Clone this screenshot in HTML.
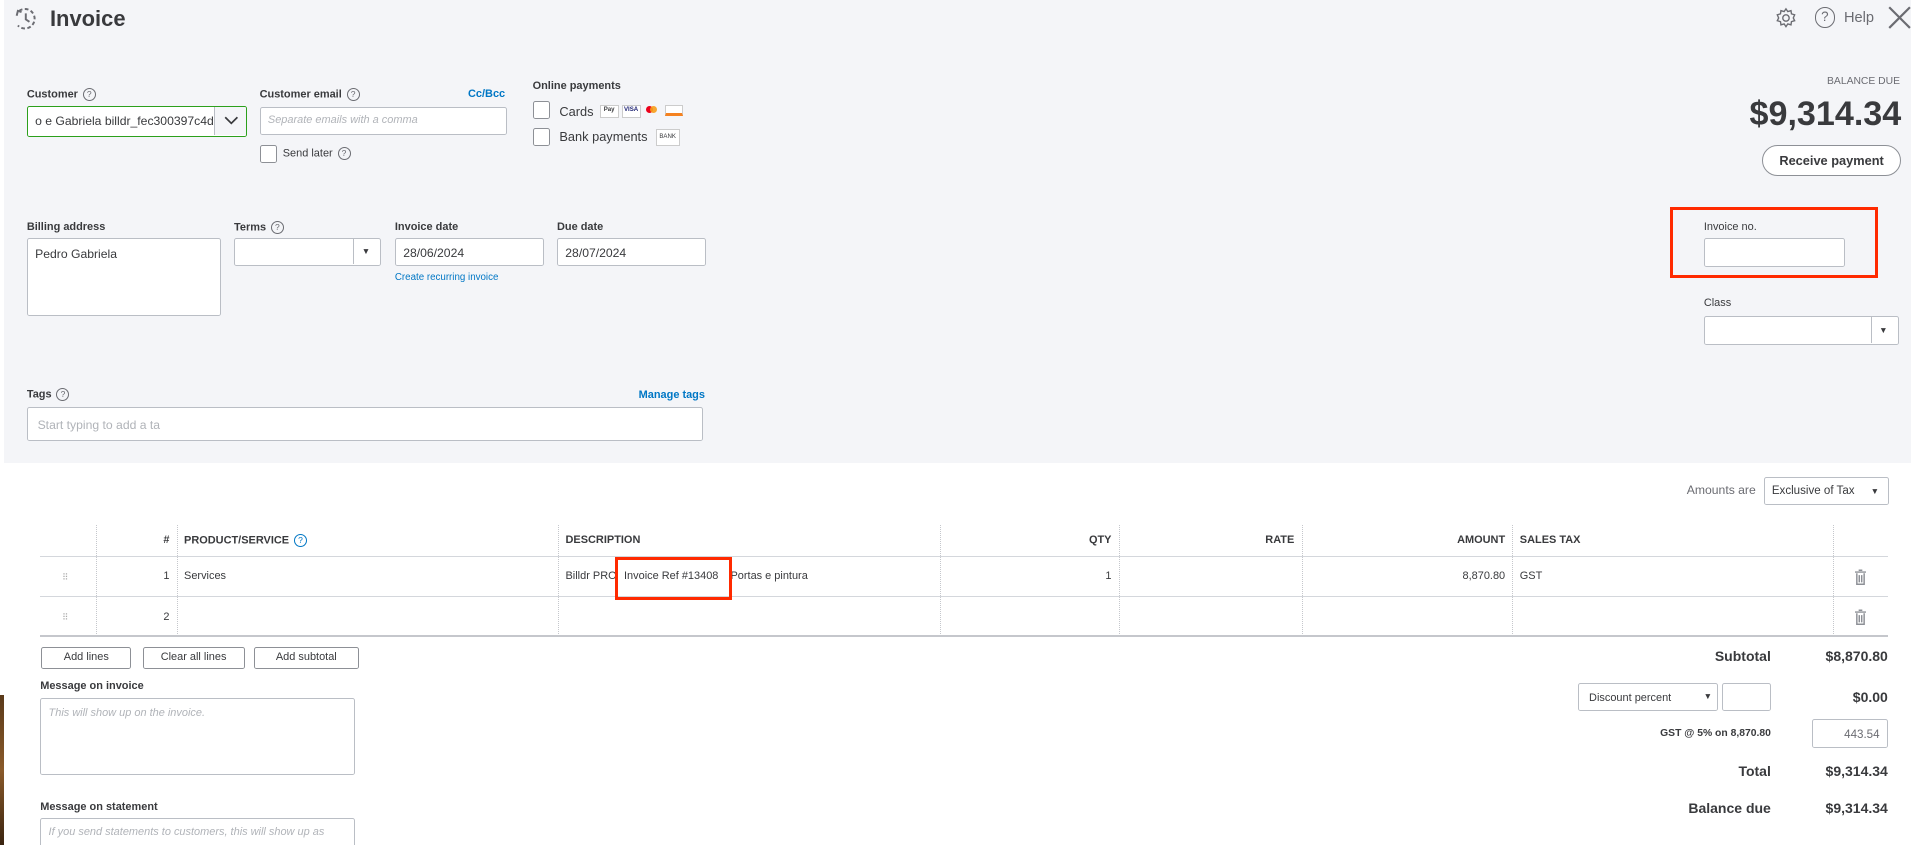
<!DOCTYPE html>
<html><head><meta charset="utf-8"><style>
html,body{margin:0;padding:0;width:1911px;height:845px;overflow:hidden;background:#fff}
#w{zoom:1.21875;position:relative;width:1568px;height:693px;font-family:"Liberation Sans",sans-serif;color:#393a3d;font-size:10px}
.a{position:absolute}
.top{left:3px;top:0;width:1565px;height:380px;background:#f4f5f8}
.lbl{font-size:9px;font-weight:bold;color:#393a3d}
.inp{background:#fff;border:1px solid #babec5;border-radius:2px;box-sizing:border-box}
.q{display:inline-block;width:9px;height:9px;border:1px solid #6b6c72;border-radius:50%;font-size:7px;line-height:9px;text-align:center;color:#6b6c72;font-weight:normal;vertical-align:middle;margin-left:4px}
.lnk{color:#0077c5;font-size:9px}
.cb{width:13px;height:13px;border:1px solid #8d9096;background:#fff;border-radius:2px}
.ph{color:#b0b3b8;font-style:italic;font-size:9px}
.vl{border-left:1px dotted #c5c7cc;top:431px;height:91px;width:0}
.th{font-size:9px;font-weight:bold;top:438px}
.td{font-size:9px;top:468px}
.btn{border:1px solid #8d9096;border-radius:2px;background:#fff;font-size:9px;text-align:center;line-height:16px;top:531px;height:16px}
.red{border:3px solid #ff2a00}
.tot{font-size:11.5px;font-weight:bold;text-align:right}
</style></head><body><div id="w">
<div class="a top"></div>
<svg class="a" style="left:11px;top:5px" width="21" height="21" viewBox="0 0 21 21" fill="none" stroke="#6b6c72" stroke-width="1.6"><path d="M5 4 A8 8 0 1 1 4 16" stroke-dasharray="3 2"/><path d="M10.5 6v5l3 2"/><path d="M3 8l1-4 3 1"/></svg>
<div class="a" style="left:41px;top:5px;font-size:18px;font-weight:bold;color:#393a3d">Invoice</div>
<svg class="a" style="left:1456px;top:6px" width="18" height="18" viewBox="0 0 24 24" fill="none" stroke="#6b6c72" stroke-width="1.5"><circle cx="12" cy="12" r="3.5"/><path d="M12 2l2 3 3.5-1 .5 3.5 3.5 1-1.5 3.5 1.5 3-3.5 1-.5 3.5-3.5-1-2 3-2-3-3.5 1-.5-3.5-3.5-1 1.5-3-1.5-3.5 3.5-1 .5-3.5 3.5 1z"/></svg>
<div class="a" style="left:1489px;top:6px;width:15px;height:15px;border:1.5px solid #6b6c72;border-radius:50%;text-align:center;font-size:11px;line-height:15px;color:#6b6c72">?</div>
<div class="a" style="left:1513px;top:8px;font-size:12px;color:#6b6c72">Help</div>
<svg class="a" style="left:1549px;top:5px" width="19" height="19" viewBox="0 0 19 19" stroke="#6b6c72" stroke-width="1.8"><path d="M1 1l17 17M18 1L1 18"/></svg>
<div class="a lbl" style="left:22px;top:72px">Customer<span class="q">?</span></div>
<div class="a inp" style="left:22px;top:87px;width:181px;height:25px;border:1px solid #2ca01c;overflow:hidden"><div class="a" style="left:6px;top:6px;font-size:10px;white-space:nowrap">o e Gabriela billdr_fec300397c4d</div><div class="a" style="left:153px;top:0;width:27px;height:23px;border-left:1px solid #babec5;background:#f4f5f8"></div><svg class="a" style="left:161px;top:7px" width="12" height="8" viewBox="0 0 12 8" fill="none" stroke="#393a3d" stroke-width="1.4"><path d="M1 1l5 5 5-5"/></svg></div>
<div class="a lbl" style="left:213px;top:72px">Customer email<span class="q">?</span></div>
<div class="a lnk" style="left:384px;top:72px;font-weight:bold">Cc/Bcc</div>
<div class="a inp" style="left:213px;top:88px;width:203px;height:23px"><span class="a ph" style="left:6px;top:5px">Separate emails with a comma</span></div>
<div class="a cb" style="left:213px;top:119px"></div>
<div class="a" style="left:232px;top:121px;font-size:9px">Send later<span class="q">?</span></div>
<div class="a lbl" style="left:437px;top:66px">Online payments</div>
<div class="a cb" style="left:437px;top:83px"></div>
<div class="a" style="left:459px;top:85px;font-size:10.5px">Cards</div>
<div class="a" style="left:492px;top:86px;width:14px;height:9px;border:1px solid #ccc;background:#fff;font-size:5px;font-weight:bold;text-align:center">Pay</div>
<div class="a" style="left:510px;top:86px;width:14px;height:9px;border:1px solid #ccc;background:#fff;font-size:5px;color:#1a1f71;font-weight:bold;text-align:center">VISA</div>
<div class="a" style="left:530px;top:87px;width:6px;height:6px;border-radius:50%;background:#eb001b"></div><div class="a" style="left:533px;top:87px;width:6px;height:6px;border-radius:50%;background:#f79e1b;opacity:.9"></div>
<div class="a" style="left:546px;top:86px;width:14px;height:9px;border:1px solid #ccc;background:#fff;border-bottom:3px solid #f58220;box-sizing:border-box"></div>
<div class="a cb" style="left:437px;top:105px"></div>
<div class="a" style="left:459px;top:106px;font-size:10.5px">Bank payments</div>
<div class="a" style="left:538px;top:106px;width:18px;height:12px;border:1px solid #ccc;background:#fff;font-size:5px;text-align:center;line-height:12px">BANK</div>
<div class="a" style="left:1450px;top:62px;width:109px;text-align:right;font-size:8.5px;color:#6b6c72">BALANCE DUE</div>
<div class="a" style="left:1380px;top:78px;width:180px;text-align:right;font-size:28px;font-weight:bold;color:#393a3d">$9,314.34</div>
<div class="a" style="left:1446px;top:119px;width:112px;height:24px;border:1.5px solid #8d9096;border-radius:14px;background:#fff;text-align:center;line-height:24px;font-size:10.5px;font-weight:bold">Receive payment</div>
<div class="a lbl" style="left:22px;top:181px">Billing address</div>
<div class="a inp" style="left:22px;top:195px;width:159px;height:64px"><span class="a" style="left:6px;top:7px;font-size:10px">Pedro Gabriela</span></div>
<div class="a lbl" style="left:192px;top:181px">Terms<span class="q">?</span></div>
<div class="a inp" style="left:192px;top:195px;width:121px;height:23px"><div class="a" style="left:97px;top:0;height:21px;border-left:1px solid #babec5"></div><span class="a" style="left:104px;top:6px;font-size:7px">▼</span></div>
<div class="a lbl" style="left:324px;top:181px">Invoice date</div>
<div class="a inp" style="left:324px;top:195px;width:122px;height:23px"><span class="a" style="left:6px;top:6px;font-size:10px">28/06/2024</span></div>
<div class="a lnk" style="left:324px;top:223px;font-size:8px">Create recurring invoice</div>
<div class="a lbl" style="left:457px;top:181px">Due date</div>
<div class="a inp" style="left:457px;top:195px;width:122px;height:23px"><span class="a" style="left:6px;top:6px;font-size:10px">28/07/2024</span></div>
<div class="a red" style="left:1370px;top:170px;width:166px;height:53px"></div>
<div class="a lbl" style="left:1398px;top:181px;font-weight:normal">Invoice no.</div>
<div class="a inp" style="left:1398px;top:195px;width:116px;height:24px"></div>
<div class="a lbl" style="left:1398px;top:244px;font-weight:normal">Class</div>
<div class="a inp" style="left:1398px;top:259px;width:160px;height:24px"><div class="a" style="left:136px;top:0;height:22px;border-left:1px solid #babec5"></div><span class="a" style="left:143px;top:7px;font-size:7px">▼</span></div>
<div class="a lbl" style="left:22px;top:318px">Tags<span class="q">?</span></div>
<div class="a lnk" style="left:524px;top:319px;font-weight:bold">Manage tags</div>
<div class="a inp" style="left:22px;top:334px;width:555px;height:28px"><span class="a" style="left:8px;top:8px;font-size:10px;color:#b0b3b8">Start typing to add a ta</span></div>
<div class="a" style="left:1384px;top:396px;font-size:10px;color:#6b6c72">Amounts are</div>
<div class="a inp" style="left:1447px;top:391px;width:103px;height:23px"><span class="a" style="left:6px;top:6px;font-size:9.5px">Exclusive of Tax</span><span class="a" style="left:87px;top:7px;font-size:7px">▼</span></div>
<div class="a" style="left:33px;top:456px;width:1516px;border-top:1px solid #d4d7dc"></div>
<div class="a" style="left:33px;top:489px;width:1516px;border-top:1px solid #d4d7dc"></div>
<div class="a" style="left:33px;top:521px;width:1516px;border-top:2px solid #c5c7cc"></div>
<div class="a vl" style="left:79px"></div><div class="a vl" style="left:145px"></div><div class="a vl" style="left:458px"></div><div class="a vl" style="left:771px"></div><div class="a vl" style="left:918px"></div><div class="a vl" style="left:1068px"></div><div class="a vl" style="left:1241px"></div><div class="a vl" style="left:1504px"></div>
<div class="a th" style="left:80px;width:59px;text-align:right">#</div>
<div class="a th" style="left:151px">PRODUCT/SERVICE<span class="q" style="border-color:#0077c5;color:#0077c5">?</span></div>
<div class="a th" style="left:464px">DESCRIPTION</div>
<div class="a th" style="left:771px;width:141px;text-align:right">QTY</div>
<div class="a th" style="left:918px;width:144px;text-align:right">RATE</div>
<div class="a th" style="left:1068px;width:167px;text-align:right">AMOUNT</div>
<div class="a th" style="left:1247px">SALES TAX</div>
<div class="a" style="left:51px;top:469px;color:#aaa;font-size:7px;letter-spacing:-1px">⠿</div>
<div class="a" style="left:51px;top:502px;color:#aaa;font-size:7px;letter-spacing:-1px">⠿</div>
<div class="a td" style="left:80px;width:59px;text-align:right">1</div>
<div class="a td" style="left:151px">Services</div>
<div class="a td" style="left:464px;white-space:nowrap">Billdr PRO - Invoice Ref #13408 - Portas e pintura</div>
<div class="a red" style="left:505px;top:457px;width:91px;height:30px;background:transparent"></div>
<div class="a" style="left:509px;top:461px;width:88px;height:24px;background:#fff"></div>
<div class="a td" style="left:512px">Invoice Ref #13408</div>
<div class="a td" style="left:771px;width:141px;text-align:right">1</div>
<div class="a td" style="left:1068px;width:167px;text-align:right">8,870.80</div>
<div class="a td" style="left:1247px">GST</div>
<div class="a td" style="left:80px;width:59px;text-align:right;top:501px">2</div>
<svg class="a" style="left:1522px;top:467px" width="9" height="13" viewBox="0 0 9 13" fill="none" stroke="#8d9096" stroke-width="1.2"><path d="M0 2.5h9M3 1h3M1.5 3.5v9h6v-9M3.5 5v6M5.5 5v6"/></svg>
<svg class="a" style="left:1522px;top:500px" width="9" height="13" viewBox="0 0 9 13" fill="none" stroke="#8d9096" stroke-width="1.2"><path d="M0 2.5h9M3 1h3M1.5 3.5v9h6v-9M3.5 5v6M5.5 5v6"/></svg>
<div class="a btn" style="left:34px;width:72px">Add lines</div>
<div class="a btn" style="left:117px;width:82px">Clear all lines</div>
<div class="a btn" style="left:208px;width:85px">Add subtotal</div>
<div class="a lbl" style="left:33px;top:558px">Message on invoice</div>
<div class="a inp" style="left:33px;top:573px;width:258px;height:63px"><span class="a ph" style="left:6px;top:6px">This will show up on the invoice.</span></div>
<div class="a lbl" style="left:33px;top:657px">Message on statement</div>
<div class="a inp" style="left:33px;top:671px;width:258px;height:30px;overflow:hidden"><span class="a ph" style="left:6px;top:6px;white-space:nowrap">If you send statements to customers, this will show up as</span></div>
<div class="a" style="left:0;top:570px;width:3px;height:123px;background:linear-gradient(#5a3a1a,#8a5a2a,#3a2410)"></div>
<div class="a tot" style="left:1300px;top:532px;width:153px">Subtotal</div>
<div class="a tot" style="left:1460px;top:532px;width:89px">$8,870.80</div>
<div class="a inp" style="left:1295px;top:560px;width:115px;height:23px"><span class="a" style="left:8px;top:7px;font-size:9px">Discount percent</span><span class="a" style="left:102px;top:6px;font-size:7px">▼</span></div>
<div class="a inp" style="left:1413px;top:560px;width:40px;height:23px"></div>
<div class="a tot" style="left:1460px;top:565px;width:89px">$0.00</div>
<div class="a" style="left:1300px;top:597px;width:153px;text-align:right;font-size:8.5px;font-weight:bold">GST @ 5% on 8,870.80</div>
<div class="a inp" style="left:1487px;top:590px;width:62px;height:24px"><span class="a" style="right:6px;top:7px;font-size:9.5px;color:#6b6c72">443.54</span></div>
<div class="a tot" style="left:1300px;top:626px;width:153px">Total</div>
<div class="a tot" style="left:1460px;top:626px;width:89px">$9,314.34</div>
<div class="a tot" style="left:1300px;top:656px;width:153px">Balance due</div>
<div class="a tot" style="left:1460px;top:656px;width:89px">$9,314.34</div>
</div></body></html>
